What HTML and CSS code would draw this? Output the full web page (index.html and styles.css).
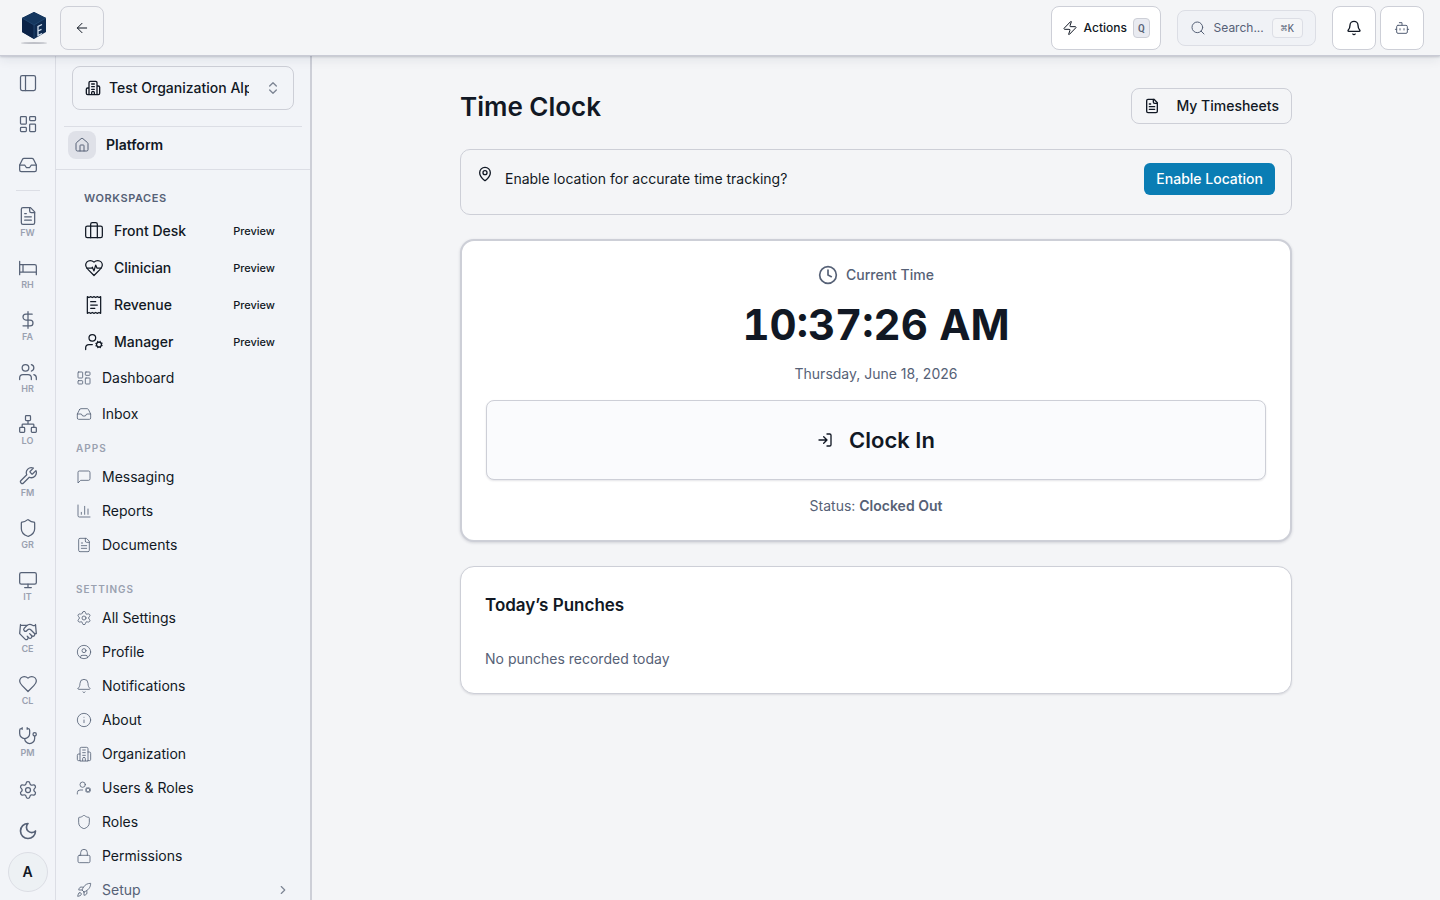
FILE: index.html
```html
<!DOCTYPE html>
<html lang="en">
<head>
    <meta charset="UTF-8">
    <meta name="viewport" content="width=device-width, initial-scale=1.0">
    <title>Time Clock</title>
    <link rel="stylesheet" href="styles.css">
</head>
<body>
    <!-- Icon sprite -->
    <svg class="sprite" aria-hidden="true">
        <symbol id="arrow-left" viewBox="0 0 24 24"><path d="m12 19-7-7 7-7M19 12H5"/></symbol>
        <symbol id="zap" viewBox="0 0 24 24"><path d="M4 14a1 1 0 0 1-.78-1.63l9.9-10.2a.5.5 0 0 1 .86.46l-1.92 6.02A1 1 0 0 0 13 10h7a1 1 0 0 1 .78 1.63l-9.9 10.2a.5.5 0 0 1-.86-.46l1.92-6.02A1 1 0 0 0 11 14z"/></symbol>
        <symbol id="search" viewBox="0 0 24 24"><circle cx="11" cy="11" r="8"/><path d="m21 21-4.3-4.3"/></symbol>
        <symbol id="bell" viewBox="0 0 24 24"><path d="M10.268 21a2 2 0 0 0 3.464 0"/><path d="M3.262 15.326A1 1 0 0 0 4 17h16a1 1 0 0 0 .74-1.673C19.41 13.956 18 12.499 18 8A6 6 0 0 0 6 8c0 4.499-1.411 5.956-2.738 7.326"/></symbol>
        <symbol id="bot" viewBox="0 0 24 24"><path d="M12 8V4H8"/><rect width="16" height="12" x="4" y="8" rx="2"/><path d="M2 14h2M20 14h2M15 13v2M9 13v2"/></symbol>
        <symbol id="panel-left" viewBox="0 0 24 24"><rect width="18" height="18" x="3" y="3" rx="2"/><path d="M9 3v18"/></symbol>
        <symbol id="dashboard" viewBox="0 0 24 24"><rect width="7" height="9" x="3" y="3" rx="1"/><rect width="7" height="5" x="14" y="3" rx="1"/><rect width="7" height="9" x="14" y="12" rx="1"/><rect width="7" height="5" x="3" y="16" rx="1"/></symbol>
        <symbol id="inbox" viewBox="0 0 24 24"><path d="M22 12h-6l-2 3h-4l-2-3H2"/><path d="M5.45 5.11 2 12v6a2 2 0 0 0 2 2h16a2 2 0 0 0 2-2v-6l-3.45-6.89A2 2 0 0 0 16.76 4H7.24a2 2 0 0 0-1.79 1.11z"/></symbol>
        <symbol id="file-text" viewBox="0 0 24 24"><path d="M15 2H6a2 2 0 0 0-2 2v16a2 2 0 0 0 2 2h12a2 2 0 0 0 2-2V7Z"/><path d="M14 2v4a2 2 0 0 0 2 2h4M10 9H8M16 13H8M16 17H8"/></symbol>
        <symbol id="bed" viewBox="0 0 24 24"><path d="M2 4v16M2 8h18a2 2 0 0 1 2 2v10M2 17h20M6 8v9"/></symbol>
        <symbol id="dollar" viewBox="0 0 24 24"><path d="M12 2v20M17 5H9.5a3.5 3.5 0 0 0 0 7h5a3.5 3.5 0 0 1 0 7H6"/></symbol>
        <symbol id="users" viewBox="0 0 24 24"><path d="M16 21v-2a4 4 0 0 0-4-4H6a4 4 0 0 0-4 4v2"/><circle cx="9" cy="7" r="4"/><path d="M22 21v-2a4 4 0 0 0-3-3.87M16 3.13a4 4 0 0 1 0 7.75"/></symbol>
        <symbol id="network" viewBox="0 0 24 24"><rect x="16" y="16" width="6" height="6" rx="1"/><rect x="2" y="16" width="6" height="6" rx="1"/><rect x="9" y="2" width="6" height="6" rx="1"/><path d="M5 16v-3a1 1 0 0 1 1-1h12a1 1 0 0 1 1 1v3M12 12V8"/></symbol>
        <symbol id="wrench" viewBox="0 0 24 24"><path d="M14.7 6.3a1 1 0 0 0 0 1.4l1.6 1.6a1 1 0 0 0 1.4 0l3.77-3.77a6 6 0 0 1-7.94 7.94l-6.91 6.91a2.12 2.12 0 0 1-3-3l6.91-6.91a6 6 0 0 1 7.94-7.94l-3.76 3.76z"/></symbol>
        <symbol id="shield" viewBox="0 0 24 24"><path d="M20 13c0 5-3.5 7.5-7.66 8.95a1 1 0 0 1-.67-.01C7.5 20.5 4 18 4 13V6a1 1 0 0 1 1-1c2 0 4.5-1.2 6.24-2.72a1.17 1.17 0 0 1 1.52 0C14.51 3.81 17 5 19 5a1 1 0 0 1 1 1z"/></symbol>
        <symbol id="monitor" viewBox="0 0 24 24"><rect width="20" height="14" x="2" y="3" rx="2"/><path d="M8 21h8M12 17v4"/></symbol>
        <symbol id="handshake" viewBox="0 0 24 24"><path d="m11 17 2 2a1 1 0 1 0 3-3"/><path d="m14 14 2.5 2.5a1 1 0 1 0 3-3l-3.88-3.88a3 3 0 0 0-4.24 0l-.88.88a1 1 0 1 1-3-3l2.81-2.81a5.79 5.79 0 0 1 7.06-.87l.47.28a2 2 0 0 0 1.42.25L21 4"/><path d="m21 3 1 11h-2M3 3 2 14l6.5 6.5a1 1 0 1 0 3-3M3 4h8"/></symbol>
        <symbol id="heart" viewBox="0 0 24 24"><path d="M19 14c1.49-1.46 3-3.21 3-5.5A5.5 5.5 0 0 0 16.5 3c-1.76 0-3 .5-4.5 2-1.5-1.5-2.74-2-4.5-2A5.5 5.5 0 0 0 2 8.5c0 2.3 1.5 4.05 3 5.5l7 7Z"/></symbol>
        <symbol id="stethoscope" viewBox="0 0 24 24"><path d="M11 2v2M5 2v2M5 3H4a2 2 0 0 0-2 2v4a6 6 0 0 0 12 0V5a2 2 0 0 0-2-2h-1"/><path d="M8 15a6 6 0 0 0 12 0v-3"/><circle cx="20" cy="10" r="2"/></symbol>
        <symbol id="settings" viewBox="0 0 24 24"><path d="M9.671 4.136a2.34 2.34 0 0 1 4.659 0 2.34 2.34 0 0 0 3.319 1.915 2.34 2.34 0 0 1 2.33 4.033 2.34 2.34 0 0 0 0 3.831 2.34 2.34 0 0 1-2.33 4.033 2.34 2.34 0 0 0-3.319 1.915 2.34 2.34 0 0 1-4.659 0 2.34 2.34 0 0 0-3.32-1.915 2.34 2.34 0 0 1-2.33-4.033 2.34 2.34 0 0 0 0-3.831A2.34 2.34 0 0 1 6.35 6.051a2.34 2.34 0 0 0 3.319-1.915"/><circle cx="12" cy="12" r="3"/></symbol>
        <symbol id="moon" viewBox="0 0 24 24"><path d="M12 3a6 6 0 0 0 9 9 9 9 0 1 1-9-9Z"/></symbol>
        <symbol id="building" viewBox="0 0 24 24"><path d="M6 22V4a2 2 0 0 1 2-2h8a2 2 0 0 1 2 2v18ZM6 12H4a2 2 0 0 0-2 2v6a2 2 0 0 0 2 2h2M18 9h2a2 2 0 0 1 2 2v9a2 2 0 0 1-2 2h-2M10 6h4M10 10h4M10 14h4M10 22v-3a2 2 0 0 1 4 0v3"/></symbol>
        <symbol id="chevrons" viewBox="0 0 24 24"><path d="m7 15 5 5 5-5M7 9l5-5 5 5"/></symbol>
        <symbol id="chevron-right" viewBox="0 0 24 24"><path d="m9 18 6-6-6-6"/></symbol>
        <symbol id="home" viewBox="0 0 24 24"><path d="M15 21v-8a1 1 0 0 0-1-1h-4a1 1 0 0 0-1 1v8"/><path d="M3 10a2 2 0 0 1 .709-1.528l7-5.999a2 2 0 0 1 2.582 0l7 5.999A2 2 0 0 1 21 10v9a2 2 0 0 1-2 2H5a2 2 0 0 1-2-2z"/></symbol>
        <symbol id="luggage" viewBox="0 0 24 24"><path d="M16 20V4a2 2 0 0 0-2-2h-4a2 2 0 0 0-2 2v16"/><rect width="20" height="14" x="2" y="6" rx="2"/></symbol>
        <symbol id="heart-pulse" viewBox="0 0 24 24"><path d="M19 14c1.49-1.46 3-3.21 3-5.5A5.5 5.5 0 0 0 16.5 3c-1.76 0-3 .5-4.5 2-1.5-1.5-2.74-2-4.5-2A5.5 5.5 0 0 0 2 8.5c0 2.3 1.5 4.05 3 5.5l7 7Z"/><path d="M3.22 12H9.5l.5-1 2 4.5 2-7 1.5 3.5h5.27"/></symbol>
        <symbol id="receipt" viewBox="0 0 24 24"><path d="M4 2v20l2-1 2 1 2-1 2 1 2-1 2 1 2-1 2 1V2l-2 1-2-1-2 1-2-1-2 1-2-1-2 1ZM14 8H8M16 12H8M13 16H8"/></symbol>
        <symbol id="user-cog" viewBox="0 0 24 24"><circle cx="10" cy="7" r="4"/><path d="M10 15H6a4 4 0 0 0-4 4v2"/><circle cx="18" cy="15" r="3"/><path d="m21.7 16.4-.9-.3M15.2 13.9l-.9-.3M16.6 18.7l.3-.9M19.1 12.2l.3-.9M19.6 18.7l-.4-1M16.8 12.3l-.4-1M14.3 16.6l1-.4M20.7 13.8l1-.4"/></symbol>
        <symbol id="message" viewBox="0 0 24 24"><path d="M21 15a2 2 0 0 1-2 2H7l-4 4V5a2 2 0 0 1 2-2h14a2 2 0 0 1 2 2z"/></symbol>
        <symbol id="chart" viewBox="0 0 24 24"><path d="M3 3v16a2 2 0 0 0 2 2h16M8 17v-3M13 17V5M18 17V9"/></symbol>
        <symbol id="profile" viewBox="0 0 24 24"><circle cx="12" cy="12" r="10"/><circle cx="12" cy="10" r="3"/><path d="M7 20.662V19a2 2 0 0 1 2-2h6a2 2 0 0 1 2 2v1.662"/></symbol>
        <symbol id="info" viewBox="0 0 24 24"><circle cx="12" cy="12" r="10"/><path d="M12 16v-4M12 8h.01"/></symbol>
        <symbol id="lock" viewBox="0 0 24 24"><rect width="18" height="11" x="3" y="11" rx="2"/><path d="M7 11V7a5 5 0 0 1 10 0v4"/></symbol>
        <symbol id="rocket" viewBox="0 0 24 24"><path d="M4.5 16.5c-1.5 1.26-2 5-2 5s3.74-.5 5-2c.71-.84.7-2.13-.09-2.91a2.18 2.18 0 0 0-2.91-.09zM12 15l-3-3a22 22 0 0 1 2-3.95A12.88 12.88 0 0 1 22 2c0 2.72-.78 7.5-6 11a22.35 22.35 0 0 1-4 2z"/><path d="M9 12H4s.55-3.03 2-4c1.62-1.08 5 0 5 0M12 15v5s3.03-.55 4-2c1.08-1.62 0-5 0-5"/></symbol>
        <symbol id="map-pin" viewBox="0 0 24 24"><path d="M20 10c0 4.993-5.539 10.193-7.399 11.799a1 1 0 0 1-1.202 0C9.539 20.193 4 14.993 4 10a8 8 0 0 1 16 0"/><circle cx="12" cy="10" r="3"/></symbol>
        <symbol id="clock" viewBox="0 0 24 24"><circle cx="12" cy="12" r="10"/><path d="M12 6v6l4 2"/></symbol>
        <symbol id="log-in" viewBox="0 0 24 24"><path d="m10 17 5-5-5-5M15 12H3M15 3h4a2 2 0 0 1 2 2v14a2 2 0 0 1-2 2h-4"/></symbol>
    </svg>

    <header class="topbar">
        <a class="logo" href="#" aria-label="Home">
            <svg viewBox="0 0 28 36">
                <ellipse cx="14" cy="33" rx="13" ry="1" fill="#bfc1c8"/>
                <path d="M14 2 26 8v14L14 29 2 22V8z" fill="#0e2a50"/>
                <path d="M14 2 26 8 14 15 2 8z" fill="#15375f"/>
                <path d="M14 15v14L2 22V8z" fill="#0b2347"/>
                <path d="M2 8l12 7 12-7M14 15v14" fill="none" stroke="#2b5580" stroke-width=".6"/>
                <path d="M22 14.500 18 16.500v9l4-2M18 21l3.500-1.700" fill="none" stroke="#d5e2f0" stroke-width="1.300"/>
            </svg>
        </a>
        <button class="square plain" aria-label="Back"><svg class="icon"><use href="#arrow-left"/></svg></button>
        <div class="tools">
            <button class="actions"><svg class="icon"><use href="#zap"/></svg>Actions<kbd>Q</kbd></button>
            <button class="search"><svg class="icon"><use href="#search"/></svg><span>Search...</span><kbd>⌘K</kbd></button>
            <div class="pair">
                <button class="square" aria-label="Notifications"><svg class="icon bold"><use href="#bell"/></svg></button>
                <button class="square muted" aria-label="Assistant"><svg class="icon"><use href="#bot"/></svg></button>
            </div>
        </div>
    </header>

    <div class="shell">
        <nav class="rail" aria-label="Modules">
            <button aria-label="Toggle sidebar"><svg class="icon"><use href="#panel-left"/></svg></button>
            <a href="#" aria-label="Dashboard"><svg class="icon"><use href="#dashboard"/></svg></a>
            <a href="#" aria-label="Inbox"><svg class="icon"><use href="#inbox"/></svg></a>
            <hr>
            <div class="modules">
                <a href="#"><svg class="icon"><use href="#file-text"/></svg>FW</a>
                <a href="#"><svg class="icon"><use href="#bed"/></svg>RH</a>
                <a href="#"><svg class="icon"><use href="#dollar"/></svg>FA</a>
                <a href="#"><svg class="icon"><use href="#users"/></svg>HR</a>
                <a href="#"><svg class="icon"><use href="#network"/></svg>LO</a>
                <a href="#"><svg class="icon"><use href="#wrench"/></svg>FM</a>
                <a href="#"><svg class="icon"><use href="#shield"/></svg>GR</a>
                <a href="#"><svg class="icon"><use href="#monitor"/></svg>IT</a>
                <a href="#"><svg class="icon"><use href="#handshake"/></svg>CE</a>
                <a href="#"><svg class="icon"><use href="#heart"/></svg>CL</a>
                <a href="#"><svg class="icon"><use href="#stethoscope"/></svg>PM</a>
            </div>
            <a href="#" aria-label="Settings"><svg class="icon"><use href="#settings"/></svg></a>
            <button aria-label="Toggle theme"><svg class="icon bold"><use href="#moon"/></svg></button>
            <button class="avatar">A</button>
        </nav>

        <aside class="sidebar">
            <div class="org">
                <button class="org-button">
                    <svg class="icon bold"><use href="#building"/></svg>
                    <span>Test Organization Alpha</span>
                    <svg class="icon chevrons"><use href="#chevrons"/></svg>
                </button>
            </div>
            <div class="platform">
                <span class="chip"><svg class="icon"><use href="#home"/></svg></span>
                Platform
            </div>
            <nav class="menu" aria-label="Platform">
                <h2 class="group workspaces-title">WORKSPACES</h2>
                <ul class="workspaces">
                    <li><a href="#"><svg class="icon"><use href="#luggage"/></svg>Front Desk<span class="badge">Preview</span></a></li>
                    <li><a href="#"><svg class="icon"><use href="#heart-pulse"/></svg>Clinician<span class="badge">Preview</span></a></li>
                    <li><a href="#"><svg class="icon"><use href="#receipt"/></svg>Revenue<span class="badge">Preview</span></a></li>
                    <li><a href="#"><svg class="icon"><use href="#user-cog"/></svg>Manager<span class="badge">Preview</span></a></li>
                </ul>
                <ul class="links roomy">
                    <li><a href="#"><svg class="icon"><use href="#dashboard"/></svg>Dashboard</a></li>
                    <li><a href="#"><svg class="icon"><use href="#inbox"/></svg>Inbox</a></li>
                </ul>
                <h2 class="group">APPS</h2>
                <ul class="links">
                    <li><a href="#"><svg class="icon"><use href="#message"/></svg>Messaging</a></li>
                    <li><a href="#"><svg class="icon"><use href="#chart"/></svg>Reports</a></li>
                    <li><a href="#"><svg class="icon"><use href="#file-text"/></svg>Documents</a></li>
                </ul>
                <h2 class="group settings-title">SETTINGS</h2>
                <ul class="links">
                    <li><a href="#"><svg class="icon"><use href="#settings"/></svg>All Settings</a></li>
                    <li><a href="#"><svg class="icon"><use href="#profile"/></svg>Profile</a></li>
                    <li><a href="#"><svg class="icon"><use href="#bell"/></svg>Notifications</a></li>
                    <li><a href="#"><svg class="icon"><use href="#info"/></svg>About</a></li>
                    <li><a href="#"><svg class="icon"><use href="#building"/></svg>Organization</a></li>
                    <li><a href="#"><svg class="icon"><use href="#user-cog"/></svg>Users &amp; Roles</a></li>
                    <li><a href="#"><svg class="icon"><use href="#shield"/></svg>Roles</a></li>
                    <li><a href="#"><svg class="icon"><use href="#lock"/></svg>Permissions</a></li>
                    <li><button class="setup"><svg class="icon"><use href="#rocket"/></svg>Setup<svg class="icon chevron"><use href="#chevron-right"/></svg></button></li>
                </ul>
            </nav>
        </aside>

        <main class="main">
            <div class="content">
                <div class="page-header">
                    <h1>Time Clock</h1>
                    <a class="timesheets" href="#"><svg class="icon bold"><use href="#file-text"/></svg>My Timesheets</a>
                </div>

                <div class="notice">
                    <svg class="icon bold"><use href="#map-pin"/></svg>
                    <p>Enable location for accurate time tracking?</p>
                    <button>Enable Location</button>
                </div>

                <section class="card clock-card">
                    <div class="current"><svg class="icon"><use href="#clock"/></svg>Current Time</div>
                    <div class="time">10:37:26 AM</div>
                    <div class="date">Thursday, June 18, 2026</div>
                    <button class="clock-in"><svg class="icon bold"><use href="#log-in"/></svg>Clock In</button>
                    <div class="status">Status: <strong>Clocked Out</strong></div>
                </section>

                <section class="card punches">
                    <h2>Today’s Punches</h2>
                    <p>No punches recorded today</p>
                </section>
            </div>
        </main>
    </div>
</body>
</html>
```
FILE: styles.css
```css
/* General styles */
:root {
    --text: #111824;
    --muted: #566176;
    --faint: #9aa1b0;
    --border: #cdcfd7;
    --line: #dcdee5;
    --page: #f4f5f7;
    --side: #f2f4f8;
}

* {
    box-sizing: border-box;
}

body {
    margin: 0;
    height: 100vh;
    display: flex;
    flex-direction: column;
    font-family: Inter, "Liberation Sans", sans-serif;
    font-size: 14px;
    line-height: 20px;
    color: var(--text);
    background-color: var(--page);
}

h1, h2, p, ul {
    margin: 0;
    padding: 0;
}

ul {
    list-style: none;
}

a {
    color: inherit;
    text-decoration: none;
}

button {
    font: inherit;
    color: inherit;
    background: none;
    border: none;
    padding: 0;
    cursor: pointer;
}

.sprite {
    display: none;
}

.icon {
    width: 16px;
    height: 16px;
    flex-shrink: 0;
    fill: none;
    stroke: currentColor;
    stroke-width: 1.5;
    stroke-linecap: round;
    stroke-linejoin: round;
}

.icon.bold {
    stroke-width: 2;
}

/* Top bar */
.topbar {
    position: relative;
    z-index: 1;
    display: flex;
    align-items: center;
    padding: 6px 16px 5px 20px;
    border-bottom: 1px solid #c9cbd5;
    background-color: var(--page);
    box-shadow: 0 1px 2px rgba(30, 35, 60, 0.2), 0 4px 10px rgba(30, 35, 60, 0.08);
}

.logo {
    width: 28px;
    height: 36px;
    margin-right: 12px;
}

.logo svg {
    display: block;
    width: 28px;
    height: 36px;
}

.square {
    display: flex;
    align-items: center;
    justify-content: center;
    width: 44px;
    height: 44px;
    border: 1px solid var(--border);
    border-radius: 8px;
    background-color: #fff;
}

.square.plain {
    background-color: transparent;
}

.square.muted {
    color: var(--muted);
}

.tools {
    display: flex;
    align-items: center;
    gap: 16px;
    margin-left: auto;
}

.pair {
    display: flex;
    gap: 4px;
}

.actions,
.search {
    display: flex;
    align-items: center;
    border: 1px solid var(--border);
    border-radius: 8px;
    font-size: 12px;
}

.actions {
    gap: 6px;
    height: 44px;
    padding: 0 10px;
    font-weight: 500;
    background-color: #fff;
}

.search {
    gap: 8px;
    height: 36px;
    padding: 0 12px;
    color: var(--muted);
    border-color: var(--line);
    background-color: #f0f2f6;
}

kbd {
    padding: 0 4px;
    border: 1px solid var(--border);
    border-radius: 4px;
    font-family: "Roboto Mono", "DejaVu Sans Mono", monospace;
    font-size: 11px;
    line-height: 18px;
    color: var(--muted);
    background-color: #e9ebf1;
}

.search kbd {
    padding: 0 8px;
    border-color: var(--line);
    background-color: var(--page);
}

.shell {
    flex: 1;
    display: flex;
    min-height: 0;
}

/* Icon rail */
.rail {
    flex: 0 0 56px;
    display: flex;
    flex-direction: column;
    align-items: center;
    gap: 1px;
    padding-top: 7px;
    border-right: 1px solid var(--line);
    color: var(--muted);
    background-color: var(--side);
    overflow: hidden;
}

.rail > a,
.rail > button {
    display: flex;
    align-items: center;
    justify-content: center;
    width: 40px;
    height: 40px;
    flex-shrink: 0;
}

.rail .icon {
    width: 20px;
    height: 20px;
}

.rail hr {
    width: 24px;
    margin: 4px 0 5px;
    border: none;
    border-top: 1px solid var(--line);
}

.modules a {
    display: flex;
    flex-direction: column;
    align-items: center;
    gap: 1px;
    height: 52px;
    padding-top: 9px;
    font-size: 9px;
    font-weight: 600;
    line-height: 12px;
    color: var(--faint);
}

.modules .icon {
    color: var(--muted);
}

.rail .avatar {
    border: 1px solid var(--line);
    border-radius: 50%;
    font-weight: 600;
    color: var(--text);
    background-color: #edf1f4;
}

/* Sidebar */
.sidebar {
    flex: 0 0 256px;
    border-right: 2px solid var(--border);
    background-color: var(--side);
    overflow: hidden;
}

.org {
    margin: 0 8px;
    padding: 10px 8px 16px;
    border-bottom: 1px solid var(--line);
}

.org-button {
    display: flex;
    align-items: center;
    gap: 8px;
    width: 100%;
    height: 44px;
    padding: 0 12px;
    border: 1px solid var(--border);
    border-radius: 8px;
    font-weight: 500;
    text-align: left;
}

.org-button span {
    flex: 1;
    margin-right: 8px;
    white-space: nowrap;
    overflow: hidden;
}

.icon.chevrons {
    color: #7d8594;
    stroke-width: 2;
}

.platform {
    display: flex;
    align-items: center;
    gap: 10px;
    padding: 4px 12px 10px;
    border-bottom: 1px solid var(--line);
    font-weight: 600;
}

.chip {
    display: flex;
    align-items: center;
    justify-content: center;
    width: 28px;
    height: 28px;
    border-radius: 8px;
    color: var(--muted);
    background-color: #dfe1e8;
}

.menu {
    padding: 20px 16px;
}

.group {
    padding: 8px 4px 4px;
    font-size: 10px;
    font-weight: 600;
    line-height: 16px;
    letter-spacing: 1px;
    color: var(--faint);
}

.workspaces-title {
    padding: 0 12px 7px;
    font-size: 11px;
    letter-spacing: 0.05em;
    color: var(--muted);
}

.settings-title {
    padding-top: 19px;
}

.workspaces {
    display: flex;
    flex-direction: column;
    gap: 1px;
}

.workspaces a {
    display: flex;
    align-items: center;
    gap: 10px;
    height: 36px;
    padding: 0 19px 0 12px;
    font-weight: 500;
}

.workspaces .icon {
    width: 20px;
    height: 20px;
}

.badge {
    margin-left: auto;
    font-size: 11px;
}

.links a,
.setup {
    display: flex;
    align-items: center;
    gap: 10px;
    width: 100%;
    height: 34px;
    padding: 0 4px;
}

.links.roomy a {
    height: 36px;
}

.links .icon {
    color: var(--muted);
    stroke-width: 1.25;
}

.links .setup {
    color: var(--muted);
}

.links .chevron {
    width: 14px;
    height: 14px;
    margin-left: auto;
    color: #7d8594;
    stroke-width: 2;
}

/* Page content */
.main {
    flex: 1;
    padding: 32px;
    overflow: auto;
}

.content {
    max-width: 832px;
    margin: 0 auto;
    display: flex;
    flex-direction: column;
    gap: 24px;
}

.page-header {
    display: flex;
    align-items: flex-start;
    justify-content: space-between;
}

h1 {
    font-size: 26px;
    font-weight: 600;
    line-height: 37px;
}

.timesheets {
    display: flex;
    align-items: center;
    gap: 16px;
    height: 36px;
    padding: 0 12px;
    border: 1px solid var(--border);
    border-radius: 8px;
    font-weight: 500;
}

.notice {
    display: flex;
    align-items: flex-start;
    gap: 12px;
    padding: 13px 16px 19px;
    border: 1px solid var(--border);
    border-radius: 10px;
}

.notice .icon {
    margin-top: 3px;
}

.notice p {
    flex: 1;
    line-height: 32px;
}

.notice button {
    height: 32px;
    padding: 0 12px;
    border-radius: 6px;
    font-weight: 500;
    color: #fff;
    background-color: #0a7db4;
}

.card {
    padding: 24px;
    border: 1px solid var(--border);
    border-radius: 14px;
    background-color: #fff;
    box-shadow: 0 1px 2px rgba(30, 35, 60, 0.12);
}

.clock-card {
    display: flex;
    flex-direction: column;
    gap: 16px;
    border-width: 2px;
    text-align: center;
    color: var(--muted);
    box-shadow: 0 1px 3px rgba(30, 35, 60, 0.16);
}

.current {
    display: flex;
    align-items: center;
    justify-content: center;
    gap: 8px;
    font-weight: 500;
}

.current .icon {
    width: 20px;
    height: 20px;
    stroke-width: 2;
}

.time {
    font-size: 42px;
    font-weight: 700;
    line-height: 47px;
    font-variant-numeric: tabular-nums;
    color: var(--text);
}

.clock-in {
    display: flex;
    align-items: center;
    justify-content: center;
    gap: 16px;
    height: 80px;
    border: 1px solid var(--border);
    border-radius: 8px;
    font-size: 22px;
    font-weight: 600;
    color: var(--text);
    background-color: #fafbfd;
    box-shadow: 0 1px 2px rgba(30, 35, 60, 0.12);
}

.status strong {
    font-weight: 600;
}

.punches h2 {
    margin-bottom: 30px;
    font-size: 17px;
    font-weight: 600;
    line-height: 28px;
}

.punches p {
    color: var(--muted);
}
```
